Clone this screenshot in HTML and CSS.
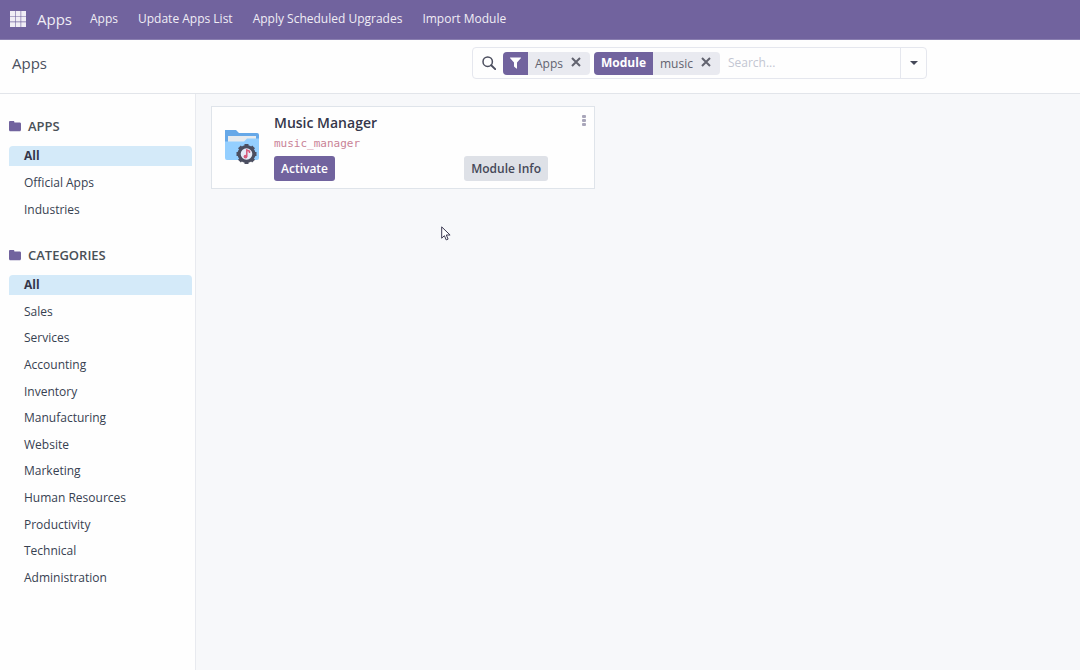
FILE: index.html
```html
<!DOCTYPE html>
<html lang="en">
<head>
<meta charset="utf-8">
<meta name="viewport" content="width=device-width, initial-scale=1">
<title>Apps</title>
<link rel="stylesheet" href="styles.css">
</head>
<body>
<header class="navbar">
  <button class="apps-menu" type="button" aria-label="Home menu">
    <svg width="16" height="16" viewBox="0 0 16 16" fill="currentColor" aria-hidden="true"><path d="M0 0h5v5H0zM5.600 0h5v5h-5zM11.200 0H16v5h-4.800zM0 5.600h5v5H0zM5.600 5.600h5v5h-5zM11.200 5.600H16v5h-4.800zM0 11.200h5V16H0zM5.600 11.200h5V16h-5zM11.200 11.200H16V16h-4.800z"/></svg>
  </button>
  <a class="brand" href="#">Apps</a>
  <nav class="nav-links">
    <a href="#">Apps</a>
    <a href="#">Update Apps List</a>
    <a href="#">Apply Scheduled Upgrades</a>
    <a href="#">Import Module</a>
  </nav>
</header>

<div class="control-panel">
  <h1 class="page-title">Apps</h1>
  <div class="search" role="search">
    <div class="search-field">
      <svg class="search-icon" width="14" height="14" viewBox="0 0 14 14" fill="none" stroke="currentColor" aria-hidden="true"><circle cx="5.700" cy="5.700" r="4.700" stroke-width="1.500"/><path d="M9.200 9.200l4 3.900" stroke-width="1.900" stroke-linecap="round"/></svg>
      <div class="facet">
        <span class="facet-label facet-icon"><svg width="11" height="12" viewBox="0 0 11 12" fill="currentColor" aria-hidden="true"><path d="M.4.500h10.200c.4 0 .5.500.2.800L7 5.400v5.900c0 .4-.4.600-.7.300L4.300 9.800C4.100 9.600 4 9.500 4 9.200V5.400L.2 1.300C-.1 1 0 .500.4.500z"/></svg></span>
        <span class="facet-value">Apps</span>
        <button class="facet-remove" type="button" aria-label="Remove Apps"><svg width="10" height="10" viewBox="0 0 10 10" fill="none" stroke="currentColor" stroke-width="2"><path d="M1 1l8 8M9 1l-8 8"/></svg></button>
      </div>
      <div class="facet">
        <span class="facet-label">Module</span>
        <span class="facet-value">music</span>
        <button class="facet-remove" type="button" aria-label="Remove Module music"><svg width="10" height="10" viewBox="0 0 10 10" fill="none" stroke="currentColor" stroke-width="2"><path d="M1 1l8 8M9 1l-8 8"/></svg></button>
      </div>
      <input class="search-input" type="text" placeholder="Search..." aria-label="Search">
    </div>
    <button class="search-toggle" type="button" aria-label="Search options"><svg width="8" height="4" viewBox="0 0 8 4" fill="currentColor"><path d="M0 0h8L4 4z"/></svg></button>
  </div>
</div>

<div class="content">
  <aside class="sidebar">
    <section class="section">
      <h2 class="section-title"><svg width="12" height="11" viewBox="0 0 12 11" fill="currentColor" aria-hidden="true"><path d="M1.200 0h3c.8 0 1.200.5 1.200 1.400h5.200c.9 0 1.400.6 1.400 1.400v6c0 .9-.5 1.500-1.400 1.500H1.400C.5 10.300 0 9.700 0 8.800V1.300C0 .5.400 0 1.200 0z"/></svg>APPS</h2>
      <ul class="filters">
        <li><a class="active" href="#">All</a></li>
        <li><a href="#">Official Apps</a></li>
        <li><a href="#">Industries</a></li>
      </ul>
    </section>
    <section class="section">
      <h2 class="section-title"><svg width="12" height="11" viewBox="0 0 12 11" fill="currentColor" aria-hidden="true"><path d="M1.200 0h3c.8 0 1.200.5 1.200 1.400h5.200c.9 0 1.400.6 1.400 1.400v6c0 .9-.5 1.500-1.400 1.500H1.400C.5 10.300 0 9.700 0 8.800V1.300C0 .5.400 0 1.200 0z"/></svg>CATEGORIES</h2>
      <ul class="filters categories">
        <li><a class="active" href="#">All</a></li>
        <li><a href="#">Sales</a></li>
        <li><a href="#">Services</a></li>
        <li><a href="#">Accounting</a></li>
        <li><a href="#">Inventory</a></li>
        <li><a href="#">Manufacturing</a></li>
        <li><a href="#">Website</a></li>
        <li><a href="#">Marketing</a></li>
        <li><a href="#">Human Resources</a></li>
        <li><a href="#">Productivity</a></li>
        <li><a href="#">Technical</a></li>
        <li><a href="#">Administration</a></li>
      </ul>
    </section>
  </aside>

  <main class="kanban">
    <article class="card">
      <svg class="card-icon" width="36" height="36" viewBox="0 0 36 36" aria-hidden="true">
        <path fill="#66a8e8" d="M1 1h11l3 3h18q2 0 2 2v13H1z"/>
        <path fill="#e6eaee" d="M4 7h28v6H4z"/>
        <path fill="#94cfff" d="M1 12.500h19l3-3h12V29q0 2-2 2H3q-2 0-2-2z"/>
        <g fill="#4b4e60">
          <circle cx="22.500" cy="25" r="9"/>
          <path d="M20.500 15h4v20h-4z"/>
          <path d="M20.500 15h4v20h-4z" transform="rotate(45 22.500 25)"/>
          <path d="M20.500 15h4v20h-4z" transform="rotate(90 22.500 25)"/>
          <path d="M20.500 15h4v20h-4z" transform="rotate(135 22.500 25)"/>
        </g>
        <circle cx="22.500" cy="25" r="5.800" fill="#e5ecf7"/>
        <path d="M22.800 27.500v-6.500l2.700 1.300v1.700" fill="none" stroke="#d75b7b" stroke-width="1.500"/>
        <circle cx="21.500" cy="27.600" r="1.900" fill="#d75b7b"/>
      </svg>
      <div class="card-body">
        <h2 class="card-title">Music Manager</h2>
        <code class="card-code">music_manager</code>
        <div class="card-actions">
          <button class="btn btn-primary" type="button">Activate</button>
          <button class="btn btn-secondary" type="button">Module Info</button>
        </div>
      </div>
      <button class="card-menu" type="button" aria-label="More"><svg width="4" height="12" viewBox="0 0 4 12" fill="currentColor"><rect width="4" height="3" rx="1"/><rect y="4" width="4" height="3" rx="1"/><rect y="8" width="4" height="3" rx="1"/></svg></button>
    </article>
    <svg class="cursor" width="10" height="15" viewBox="0 0 10 15" aria-hidden="true"><path d="M.7.900v11.300l2.700-2.500 1.800 4.200 1.900-.8-1.800-4.100h3.800z" fill="#fff" stroke="#3b3850" stroke-width="1"/></svg>
  </main>
</div>
</body>
</html>
```
FILE: styles.css
```css
* {
  box-sizing: border-box;
}

body {
  margin: 0;
  min-height: 100vh;
  display: flex;
  flex-direction: column;
  background: #fefefe;
  color: #374151;
  font: 12px/20px "Segoe UI", "Open Sans", "Noto Sans", sans-serif;
}

a {
  color: inherit;
  text-decoration: none;
}

button {
  border: 0;
  padding: 0;
  background: none;
  color: inherit;
  font: inherit;
  cursor: pointer;
}

svg {
  display: block;
  flex: none;
}

h1, h2, ul {
  margin: 0;
  padding: 0;
}

.navbar {
  display: flex;
  align-items: center;
  height: 40px;
  padding: 0 10px 2px;
  background: #71639e;
  border-bottom: 1px solid #8a7fb0;
  color: #f0edf5;
}

.brand {
  margin: 0 18px 0 11px;
  font-size: 15px;
}

.nav-links {
  display: flex;
  gap: 20px;
}

.control-panel {
  display: grid;
  grid-template-columns: 460fr 455fr 153fr;
  align-items: start;
  height: 54px;
  padding: 7px 0 0 12px;
  border-bottom: 1px solid #e2e5ea;
}

.page-title {
  padding-top: 6px;
  color: #4b5060;
  font-size: 15px;
  font-weight: 400;
}

.search {
  display: flex;
  min-width: 0;
  height: 32px;
  border: 1px solid #e5e7ee;
  border-radius: 4px;
}

.search-field {
  display: flex;
  flex: 1;
  align-items: center;
  min-width: 0;
  gap: 4px;
  padding-left: 9px;
}

.search-icon {
  margin-right: 3px;
  color: #4b4e5e;
}

.facet {
  display: flex;
  align-items: center;
  height: 23px;
  overflow: hidden;
  border-radius: 4px;
  background: #e9eaf0;
  color: #62636f;
}

.facet-label {
  display: flex;
  align-items: center;
  height: 23px;
  padding: 0 7px;
  background: #71639e;
  color: #fff;
  font-weight: 700;
}

.facet-value {
  padding: 1px 8px 0 7px;
}

.facet-remove {
  padding: 0 9px 2px 0;
}

.search-input {
  flex: 1;
  min-width: 0;
  border: 0;
  padding: 0 4px;
  outline: 0;
  background: none;
  color: inherit;
  font: inherit;
}

.search-input::placeholder {
  color: #c3c6d2;
  opacity: 1;
}

.search-toggle {
  display: flex;
  align-items: center;
  justify-content: center;
  width: 26px;
  border-left: 1px solid #e5e7ee;
  color: #454858;
}

.content {
  display: flex;
  flex: 1;
}

.sidebar {
  flex: none;
  width: 196px;
  padding: 22px 3px 22px 9px;
  border-right: 1px solid #e8eaef;
}

.section {
  margin-bottom: 25px;
}

.section-title {
  display: flex;
  align-items: center;
  gap: 7px;
  margin-bottom: 10px;
  color: #495057;
  font-size: 13px;
  font-weight: 600;
}

.section-title svg {
  color: #71639e;
}

.filters {
  display: flex;
  flex-direction: column;
  justify-content: space-between;
  gap: 7px;
  list-style: none;
}

.categories {
  gap: 6px;
  min-height: 313px;
}

.filters a {
  display: block;
  padding-left: 15px;
  border-radius: 4px 4px 0 0;
}

.filters .active {
  background: #d4eaf9;
  color: #34364a;
  font-weight: 700;
}

.kanban {
  position: relative;
  flex: 1;
  min-width: 0;
  padding: 12px 15px;
  background: #f7f8fa;
}

.card {
  display: flex;
  max-width: 384px;
  padding: 6px 8px 7px 12px;
  border: 1px solid #dfe4ea;
  background: #fefefe;
}

.card-icon {
  margin: 16px 14px 0 0;
}

.card-body {
  flex: 1;
}

.card-title {
  color: #34364a;
  font-size: 14px;
  font-weight: 600;
}

.card-code {
  display: block;
  color: #c98296;
  font: 11px/22px "DejaVu Sans Mono", monospace;
}

.card-actions {
  display: flex;
  justify-content: space-between;
  margin-top: 1px;
}

.btn {
  height: 25px;
  padding: 0 7px;
  border-radius: 3px;
  font-weight: 600;
}

.btn-primary {
  background: #71639e;
  color: #fff;
}

.btn-secondary {
  background: #dee1e7;
  color: #454858;
}

.card-menu {
  display: flex;
  align-self: flex-start;
  margin: 2px 0 0 34px;
  color: #a9a6ba;
}

.cursor {
  position: absolute;
  top: 132px;
  left: 245px;
}
```
